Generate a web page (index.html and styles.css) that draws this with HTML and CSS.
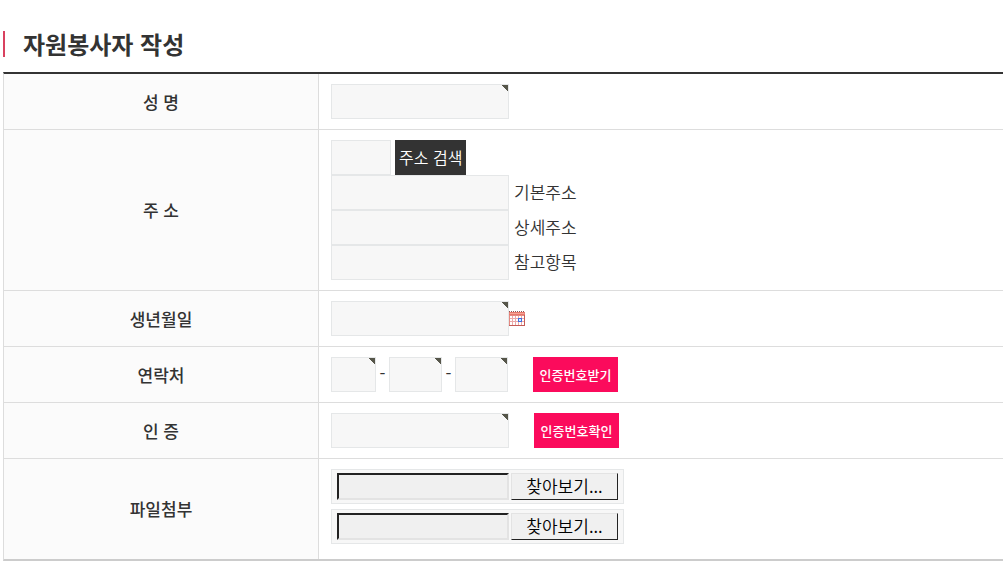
FILE: index.html
```html
<!DOCTYPE html>
<html lang="ko">
<head>
  <meta charset="UTF-8">
  <meta name="viewport" content="width=device-width, initial-scale=1.0">
  <title>자원봉사자 작성</title>
  <link rel="stylesheet" href="styles.css">
</head>
<body>
  <h1 class="page-title">자원봉사자 작성</h1>

  <form class="volunteer-form">
    <table class="form-table">
      <tr>
        <th scope="row"><label for="name">성 명</label></th>
        <td>
          <div class="line"><input type="text" class="field required" id="name" name="name"></div>
        </td>
      </tr>
      <tr>
        <th scope="row"><label for="zipcode">주 소</label></th>
        <td>
          <div class="line">
            <input type="text" class="field zip" id="zipcode" name="zipcode">
            <button type="button" class="btn-dark">주소 검색</button>
          </div>
          <div class="line address">
            <input type="text" class="field" id="addr1" name="addr1">
            <label for="addr1">기본주소</label>
          </div>
          <div class="line address">
            <input type="text" class="field" id="addr2" name="addr2">
            <label for="addr2">상세주소</label>
          </div>
          <div class="line address">
            <input type="text" class="field" id="addr3" name="addr3">
            <label for="addr3">참고항목</label>
          </div>
        </td>
      </tr>
      <tr>
        <th scope="row"><label for="birth">생년월일</label></th>
        <td>
          <div class="line">
            <input type="text" class="field required" id="birth" name="birth">
            <button type="button" class="btn-calendar" aria-label="달력">
              <svg width="16" height="15" viewBox="0 0 16 15" shape-rendering="crispEdges">
                <rect y="1" width="16" height="14" fill="#e58a82"/>
                <path d="M0 .5h16" stroke="#8c5a58" stroke-dasharray="1 1"/>
                <path d="M0 1.5h16M0 3.5h16" stroke="#e8776c"/>
                <path d="M1 2.5h14" stroke="#f4a596"/>
                <rect x="1" y="5" width="14" height="9" fill="#fff"/>
                <path d="M3.5 5v9M6.5 5v9M9.5 5v9M12.5 5v9M1 7.5h14M1 10.5h14" stroke="#eba9a9"/>
                <rect x="9" y="7" width="4" height="4" fill="#3b6fe0"/>
                <rect x="10" y="8" width="2" height="2" fill="#dfeaff"/>
                <path d="M15.5 4v11M0 14.5h16" stroke="#c45c58"/>
              </svg>
            </button>
          </div>
        </td>
      </tr>
      <tr>
        <th scope="row"><label for="tel1">연락처</label></th>
        <td>
          <div class="line">
            <input type="text" class="field required tel-first" id="tel1" name="tel1">
            <span class="dash">-</span>
            <input type="text" class="field required tel" name="tel2" aria-label="연락처">
            <span class="dash">-</span>
            <input type="text" class="field required tel" name="tel3" aria-label="연락처">
            <button type="button" class="btn-pink">인증번호받기</button>
          </div>
        </td>
      </tr>
      <tr>
        <th scope="row"><label for="auth">인 증</label></th>
        <td>
          <div class="line">
            <input type="text" class="field required" id="auth" name="auth">
            <button type="button" class="btn-pink">인증번호확인</button>
          </div>
        </td>
      </tr>
      <tr>
        <th scope="row"><label for="file1">파일첨부</label></th>
        <td class="files">
          <div class="file-box">
            <input type="text" class="file-name" id="file1" readonly>
            <button type="button" class="file-btn" onclick="openFile(this)">찾아보기...</button>
            <input type="file" name="file1" onchange="showFile(this)" hidden>
          </div>
          <div class="file-box">
            <input type="text" class="file-name" id="file2" aria-label="파일첨부" readonly>
            <button type="button" class="file-btn" onclick="openFile(this)">찾아보기...</button>
            <input type="file" name="file2" onchange="showFile(this)" hidden>
          </div>
        </td>
      </tr>
    </table>
  </form>

  <script>
    function openFile(btn) {
      btn.nextElementSibling.click();
    }

    function showFile(input) {
      const name = input.parentNode.querySelector(".file-name");
      name.value = input.files.length ? input.files[0].name : "";
    }
  </script>
</body>
</html>
```
FILE: styles.css
```css
* {
  box-sizing: border-box;
  margin: 0;
  padding: 0;
}

body {
  padding: 31px 0 20px 3px;
  font-family: 'Noto Sans CJK KR', sans-serif;
  font-size: 17px;
  color: #333;
  background: #fff;
}

input,
button {
  font-family: inherit;
  font-size: inherit;
  color: inherit;
}

button {
  cursor: pointer;
}

.page-title {
  margin-bottom: 15px;
  padding-left: 18px;
  border-left: 2px solid #d9415f;
  font-size: 24px;
  font-weight: 700;
  line-height: 26px;
}

.form-table {
  width: 100%;
  table-layout: fixed;
  border-collapse: separate;
  border-spacing: 0;
  border-top: 2px solid #333;
  border-bottom: 2px solid #ccc;
  border-left: 1px solid #ddd;
}

.form-table th {
  width: 315px;
  padding-bottom: 1px;
  border-right: 1px solid #ddd;
  border-bottom: 1px solid #ddd;
  background: #fbfbfb;
  font-weight: 500;
  text-align: center;
  vertical-align: middle;
}

.form-table td {
  padding: 10px 12px;
  border-bottom: 1px solid #ddd;
}

.form-table tr:last-child th,
.form-table tr:last-child td {
  border-bottom: none;
}

.line {
  display: flex;
  align-items: center;
  height: 35px;
}

.address {
  gap: 5px;
}

.address label {
  padding-bottom: 2px;
  font-weight: 350;
}

.field {
  width: 178px;
  height: 35px;
  padding: 0 6px;
  border: 1px solid #e5e7e8;
  background: #f7f7f7;
}

/* dark corner marks a required field */
.required {
  background: #f7f7f7 linear-gradient(to bottom left, #56564a 56%, transparent 56%) no-repeat top right / 6px 6px;
}

.zip {
  width: 60px;
}

.tel-first {
  width: 45px;
}

.tel {
  width: 53px;
}

.dash {
  width: 13px;
  padding-bottom: 4px;
  text-align: center;
}

.btn-dark {
  height: 35px;
  margin-left: 4px;
  padding: 0 4px 2px;
  border: none;
  background: #333;
  color: #fff;
  font-size: 16px;
  font-weight: 350;
}

.btn-pink {
  width: 85px;
  height: 35px;
  margin-left: 25px;
  border: none;
  background: #fb0b5c;
  color: #fff;
  font-size: 13px;
  font-weight: 500;
}

.btn-calendar {
  border: none;
  background: none;
}

.btn-calendar svg {
  display: block;
}

.form-table .files {
  padding-bottom: 15px;
}

.file-box {
  display: flex;
  gap: 2px;
  width: 293px;
  height: 35px;
  padding: 3px 5px;
  border: 1px solid #e5e7e8;
  background: #f7f7f7;
}

.file-box + .file-box {
  margin-top: 5px;
}

.file-name {
  width: 172px;
  padding: 0 4px;
  border: 2px solid;
  border-color: #222 #e3e3e3 #e3e3e3 #222;
  background: #f0f0f0;
}

.file-btn {
  width: 108px;
  padding-bottom: 2px;
  border: 1px solid;
  border-color: #e3e3e3 #222 #222 #e3e3e3;
  background: #f0f0f0;
  color: #000;
  font-weight: 350;
  line-height: 23px;
}
```
